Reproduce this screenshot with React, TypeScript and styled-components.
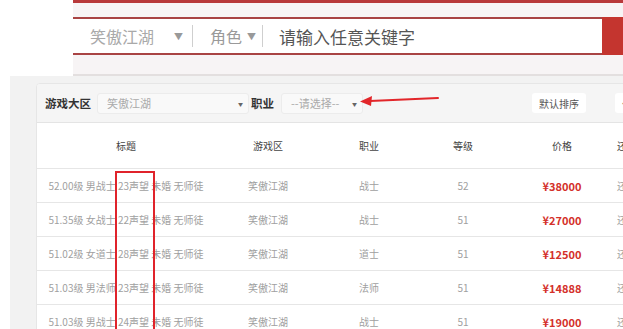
import React from 'react';
import styled, { createGlobalStyle } from 'styled-components';

const GlobalStyle = createGlobalStyle`
    body {
        margin: 0;
        background: #fff;
        font-family: "Noto Sans CJK SC", "Noto Sans", sans-serif;
    }
`;

const Page = styled.div`
    position: relative;
    width: 623px;
    height: 329px;
    overflow: hidden;
    background: #fff;
`;

/* upper screenshot: the search bar */
const TopShot = styled.div`
    margin-left: 73px;
    height: 76px;
    box-sizing: border-box;
    background: #f7f4f5;
    border-top: 3px solid #b8393a;
    border-bottom: 2px solid #e3dfdf;
    padding-top: 14px;
`;
const SearchBar = styled.div`
    display: flex;
    height: 38px;
    box-sizing: border-box;
    border-top: 2px solid #a94444;
    border-bottom: 2px solid #a94444;
    background: #fff;
`;
const SearchField = styled.div`
    flex: 1;
    display: flex;
    align-items: center;
    padding-left: 17px;
    font-size: 16px;
`;
const Segment = styled.span<{ $tone: string; $size?: number }>`
    color: ${p => p.$tone};
    font-size: ${p => p.$size ?? 16}px;
`;
const Caret = styled.span<{ $gap: number; $after: number }>`
    font-size: 9px;
    color: #999;
    margin-left: ${p => p.$gap}px;
    margin-right: ${p => p.$after}px;
`;
const Divider = styled.span<{ $after: number }>`
    width: 1px;
    height: 22px;
    background: #cfcfcf;
    margin-right: ${p => p.$after}px;
`;
const SearchButton = styled.div`
    width: 21px;
    margin-top: -2px;
    margin-bottom: -2px;
    background: #c4352f;
`;

/* lower screenshot: the trade list */
const BottomShot = styled.div`
    margin-left: 10px;
    height: 253px;
    background: #f2f2f2;
    padding: 7px 0 0 26px;
`;
const Panel = styled.div`
    width: 640px;
    height: 260px;
    background: #fff;
    border: 1px solid #e6e6e6;
    border-radius: 4px 0 0 0;
    overflow: hidden;
`;
const FilterBar = styled.div`
    display: flex;
    align-items: center;
    height: 38px;
    padding-left: 8px;
    background: #f5f5f5;
    border-bottom: 1px solid #e4e4e4;
`;
const Label = styled.span`
    font-size: 11.5px;
    font-weight: 700;
    color: #333;
`;
const Select = styled.div<{ $width: number; $before: number }>`
    position: relative;
    width: ${p => p.$width}px;
    height: 21px;
    box-sizing: border-box;
    margin: 0 2px 0 ${p => p.$before}px;
    padding-left: 9px;
    display: flex;
    align-items: center;
    background: #f9f9f9;
    border: 1px solid #ececec;
    border-radius: 3px;
    font-size: 11px;
    color: #aaa;
    &::after {
        content: '▼';
        position: absolute;
        right: 5px;
        top: 6px;
        font-size: 5px;
        color: #666;
    }
`;
const SortGroup = styled.div`
    display: flex;
    gap: 29px;
    margin-left: 167px;
`;
const SortButton = styled.div`
    height: 20px;
    padding: 0 7px;
    display: flex;
    align-items: center;
    background: #fff;
    border-radius: 3px;
    font-size: 10px;
    color: #555;
`;

const columns = '178px 106px 96px 92px 106px 40px';

const HeadRow = styled.div`
    display: grid;
    grid-template-columns: ${columns};
    align-items: center;
    height: 45px;
    border-bottom: 1px solid #e6e6e6;
    font-size: 10px;
    color: #444;
`;
const Row = styled(HeadRow)`
    height: 33px;
    color: #a0a0a0;
`;
const Cell = styled.div<{ $start?: boolean }>`
    text-align: ${p => (p.$start ? 'left' : 'center')};
    padding-left: ${p => (p.$start ? 2 : 0)}px;
    white-space: nowrap;
`;
const Price = styled(Cell)`
    color: #d4302a;
    font-size: 11px;
    font-weight: 700;
`;

/* annotations drawn over the screenshot */
const Highlight = styled.div`
    position: absolute;
    left: 115px;
    top: 171px;
    width: 40px;
    height: 200px;
    border: 2px solid #e0232b;
    box-sizing: border-box;
`;
const Pointer = styled.svg`
    position: absolute;
    left: 358px;
    top: 93px;
`;

const rows = [
    { title: '52.00级 男战士 23声望 未婚 无师徒', job: '战士', level: 52, price: 38000 },
    { title: '51.35级 女战士 22声望 未婚 无师徒', job: '战士', level: 51, price: 27000 },
    { title: '51.02级 女道士 28声望 未婚 无师徒', job: '道士', level: 51, price: 12500 },
    { title: '51.03级 男法师 23声望 未婚 无师徒', job: '法师', level: 51, price: 14888 },
    { title: '51.03级 男战士 24声望 未婚 无师徒', job: '战士', level: 51, price: 19000 },
];

const App = () => (
    <Page>
        <GlobalStyle />
        <TopShot>
            <SearchBar>
                <SearchField>
                    <Segment $tone="#a9a9a9">笑傲江湖</Segment>
                    <Caret $gap={20} $after={9}>▼</Caret>
                    <Divider $after={17} />
                    <Segment $tone="#9a9a9a">角色</Segment>
                    <Caret $gap={5} $after={6}>▼</Caret>
                    <Divider $after={16} />
                    <Segment $tone="#555" $size={17}>请输入任意关键字</Segment>
                </SearchField>
                <SearchButton />
            </SearchBar>
        </TopShot>
        <BottomShot>
            <Panel>
                <FilterBar>
                    <Label>游戏大区</Label>
                    <Select $width={152} $before={6}>笑傲江湖</Select>
                    <Label>职业</Label>
                    <Select $width={82} $before={7}>--请选择--</Select>
                    <SortGroup>
                        <SortButton>默认排序</SortButton>
                        <SortButton>价格</SortButton>
                    </SortGroup>
                </FilterBar>
                <HeadRow>
                    <Cell>标题</Cell>
                    <Cell>游戏区</Cell>
                    <Cell>职业</Cell>
                    <Cell>等级</Cell>
                    <Cell>价格</Cell>
                    <Cell $start>还价</Cell>
                </HeadRow>
                {rows.map(r => (
                    <Row key={r.title}>
                        <Cell>{r.title}</Cell>
                        <Cell>笑傲江湖</Cell>
                        <Cell>{r.job}</Cell>
                        <Cell>{r.level}</Cell>
                        <Price>¥{r.price}</Price>
                        <Cell $start>还价</Cell>
                    </Row>
                ))}
            </Panel>
        </BottomShot>
        <Highlight />
        <Pointer width="84" height="14" viewBox="0 0 84 14">
            <path d="M80 5 L12 8" stroke="#e2262a" strokeWidth="2" strokeLinecap="round" />
            <path d="M2 8.5 L14 3 L13 13 Z" fill="#e2262a" />
        </Pointer>
    </Page>
);

export default App;
